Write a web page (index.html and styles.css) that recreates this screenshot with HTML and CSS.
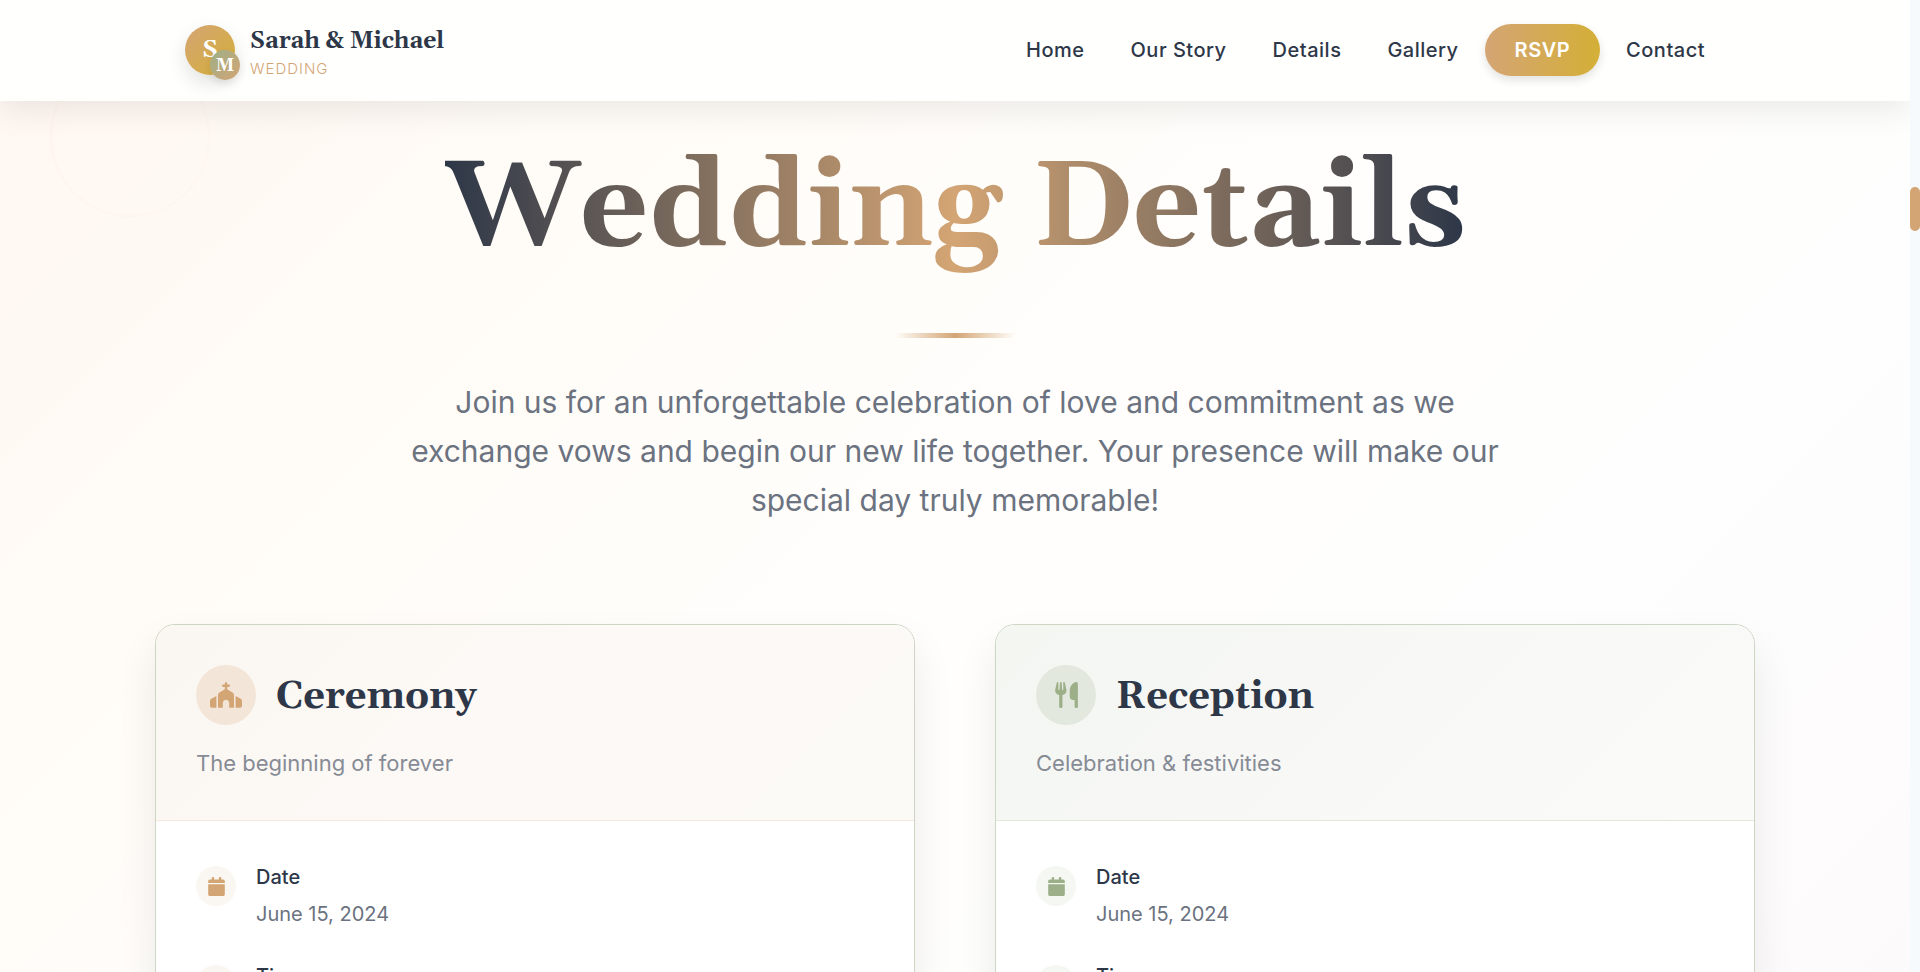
FILE: index.html
```html
<!DOCTYPE html>
<html lang="en">
<head>
<meta charset="utf-8">
<title>Sarah &amp; Michael Wedding</title>
<link rel="stylesheet" href="styles.css">
</head>
<body>
<svg class="sprite" aria-hidden="true">
  <symbol id="church" viewBox="0 0 640 512"><path d="M344 24c0-13.3-10.7-24-24-24s-24 10.7-24 24V48H264c-13.3 0-24 10.7-24 24s10.7 24 24 24h32v46.4L183.3 210c-14.5 8.7-23.3 24.3-23.3 41.2V512h96V416c0-35.3 28.7-64 64-64s64 28.7 64 64v96h96V251.2c0-16.9-8.8-32.5-23.3-41.2L344 142.4V96h32c13.3 0 24-10.7 24-24s-10.7-24-24-24H344V24zM24.9 330.3C9.5 338.8 0 354.9 0 372.4V464c0 26.5 21.5 48 48 48h80V273.6L24.9 330.3zM592 512c26.5 0 48-21.5 48-48V372.4c0-17.5-9.5-33.6-24.9-42.1L512 273.6V512h80z"/></symbol>
  <symbol id="utensils" viewBox="0 0 448 512"><path d="M416 0C400 0 288 32 288 176V288c0 35.3 28.7 64 64 64h32V480c0 17.7 14.3 32 32 32s32-14.3 32-32V352 240 32c0-17.7-14.3-32-32-32zM64 16C64 7.8 57.9 1 49.7 .1S34.2 4.6 32.4 12.5L2.1 148.8C.7 155.1 0 161.5 0 167.9c0 45.9 35.1 83.6 80 87.7V480c0 17.7 14.3 32 32 32s32-14.3 32-32V255.6c44.9-4.1 80-41.8 80-87.7c0-6.4-.7-12.8-2.1-19.1L191.6 12.5c-1.8-8-9.3-13.3-17.4-12.4S160 7.8 160 16V150.2c0 5.4-4.4 9.8-9.8 9.8c-5.1 0-9.3-3.9-9.8-9L127.9 14.6C127.2 6.3 120.3 0 112 0s-15.2 6.3-15.9 14.6L83.7 151c-.5 5.1-4.7 9-9.8 9c-5.4 0-9.8-4.4-9.8-9.8V16z"/></symbol>
  <symbol id="calendar" viewBox="0 0 448 512"><path d="M96 32V64H48C21.5 64 0 85.5 0 112v48H448V112c0-26.5-21.5-48-48-48H352V32c0-17.7-14.3-32-32-32s-32 14.3-32 32V64H160V32c0-17.7-14.3-32-32-32S96 14.3 96 32zM448 192H0V464c0 26.5 21.5 48 48 48H400c26.5 0 48-21.5 48-48V192z"/></symbol>
  <symbol id="clock" viewBox="0 0 512 512"><path d="M256 0a256 256 0 1 1 0 512A256 256 0 1 1 256 0zM232 120V256c0 8 4 15.500 10.700 20l96 64c11 7.400 25.900 4.400 33.300-6.700s4.400-25.900-6.700-33.300L280 243.200V120c0-13.300-10.700-24-24-24s-24 10.700-24 24z"/></symbol>
</svg>
<div class="page">
  <header class="site-header">
    <div class="bar">
      <a class="brand" href="#home">
        <span class="monogram">S<span class="badge">M</span></span>
        <span class="brand-text"><span class="brand-name">Sarah &amp; Michael</span><span class="brand-tag">WEDDING</span></span>
      </a>
      <nav class="nav">
        <a href="#home">Home</a>
        <a href="#story">Our Story</a>
        <a href="#details">Details</a>
        <a href="#gallery">Gallery</a>
        <a class="rsvp" href="#rsvp">RSVP</a>
        <a href="#contact">Contact</a>
      </nav>
    </div>
  </header>
  <main class="details" id="details">
    <div class="ring"></div>
    <h1>Wedding Details</h1>
    <div class="divider"></div>
    <p class="intro">Join us for an unforgettable celebration of love and commitment as we exchange vows and begin our new life together. Your presence will make our special day truly memorable!</p>
    <div class="cards">
      <article class="card ceremony">
        <div class="card-head">
          <div class="card-title"><span class="disc"><svg class="church"><use href="#church"/></svg></span><h2>Ceremony</h2></div>
          <p>The beginning of forever</p>
        </div>
        <div class="card-body">
          <div class="item"><span class="dot"><svg><use href="#calendar"/></svg></span><div><h3>Date</h3><p>June 15, 2024</p></div></div>
          <div class="item"><span class="dot"><svg><use href="#clock"/></svg></span><div><h3>Time</h3></div></div>
        </div>
      </article>
      <article class="card reception">
        <div class="card-head">
          <div class="card-title"><span class="disc"><svg class="utensils"><use href="#utensils"/></svg></span><h2>Reception</h2></div>
          <p>Celebration &amp; festivities</p>
        </div>
        <div class="card-body">
          <div class="item"><span class="dot"><svg><use href="#calendar"/></svg></span><div><h3>Date</h3><p>June 15, 2024</p></div></div>
          <div class="item"><span class="dot"><svg><use href="#clock"/></svg></span><div><h3>Time</h3></div></div>
        </div>
      </article>
    </div>
  </main>
</div>
<div class="scroll-track"><div class="scroll-thumb"></div></div>
</body>
</html>
```

FILE: styles.css
```css
* { box-sizing: border-box; margin: 0; }
body {
  display: grid;
  grid-template-columns: 1fr 10px;
  height: 100vh;
  overflow: hidden;
  font-family: Inter, "Liberation Sans", sans-serif;
  color: #2d3748;
}
.sprite { display: none; }
a { color: inherit; text-decoration: none; }
h1, h2, .brand-name, .monogram { font-family: Georgia, Gelasio, "Liberation Serif", serif; font-weight: 700; }

.page { display: flex; flex-direction: column; height: 100vh; overflow: hidden; }
.scroll-track { background: #f7fafc; padding-top: 187px; }
.scroll-thumb { height: 44px; border-radius: 5px; background: #d4a574; }

.site-header {
  position: relative;
  z-index: 2;
  flex: none;
  border-bottom: 1px solid #fffffe;
  background: #fffffe;
  box-shadow: 0 10px 30px rgba(0, 0, 0, 0.08);
}
.bar {
  display: flex;
  align-items: center;
  justify-content: space-between;
  max-width: 1600px;
  height: 100px;
  margin: 0 auto;
  padding: 0 30px;
}
.brand { display: flex; align-items: center; gap: 15px; }
.monogram {
  position: relative;
  display: grid;
  place-items: center;
  width: 50px;
  height: 50px;
  border-radius: 50%;
  background: linear-gradient(135deg, #d4a574, #d4af37);
  box-shadow: 0 8px 20px rgba(0, 0, 0, 0.12);
  color: #fff;
  font-size: 24px;
}
.badge {
  position: absolute;
  right: -5px;
  bottom: -5px;
  display: grid;
  place-items: center;
  width: 30px;
  height: 30px;
  border-radius: 50%;
  background: linear-gradient(135deg, #9caf88, #d4a574);
  box-shadow: 0 4px 8px rgba(0, 0, 0, 0.1);
  font-size: 18px;
}
.brand-text { display: flex; flex-direction: column; padding-top: 6px; }
.brand-name { font-size: 23px; line-height: 32px; }
.brand-tag { font-size: 15px; line-height: 22px; font-weight: 300; letter-spacing: 1px; color: #d4a574; }

.nav { display: flex; align-items: center; gap: 6px; font-size: 20px; font-weight: 500; letter-spacing: 0.5px; }
.nav a { padding: 0 20px; line-height: 52px; }
.nav .rsvp {
  padding: 0 30px;
  border-radius: 26px;
  background: linear-gradient(90deg, #d4a574, #d4af37);
  box-shadow: 0 4px 10px rgba(0, 0, 0, 0.12);
  color: #fff;
  font-weight: 600;
}

.details {
  position: relative;
  flex: 1;
  min-height: 0;
  overflow: hidden;
  display: flex;
  flex-direction: column;
  align-items: center;
  padding-top: 37px;
  background: linear-gradient(135deg, #fff7f2 0%, #fffcf7 25%, #fffefc 50%, #fefefe 75%, #fdfafb 100%);
}
.ring {
  position: absolute;
  top: -44px;
  left: 50px;
  width: 160px;
  height: 160px;
  border-radius: 50%;
  border: 2px solid rgba(212, 165, 116, 0.03);
}
h1 {
  font-size: 120px;
  line-height: 144px;
  background: linear-gradient(90deg, #2d3748, #d4a574 50%, #2d3748);
  -webkit-background-clip: text;
  background-clip: text;
  color: transparent;
}
.divider {
  flex: none;
  width: 120px;
  height: 5px;
  margin: 51px 0 40px;
  background: linear-gradient(90deg, transparent, #d4a574, transparent);
}
.intro { max-width: 1100px; font-size: 30px; line-height: 49px; text-align: center; color: #6b7280; }
.cards { flex: none; display: grid; grid-template-columns: 1fr 1fr; gap: 80px; width: 100%; max-width: 1600px; margin-top: 99px; }
.card {
  overflow: hidden;
  border: 1px solid #ccd6c3;
  border-radius: 20px;
  background: #fff;
  box-shadow: 0 20px 40px rgba(0, 0, 0, 0.08);
}
.card-head { padding: 40px; border-bottom: 1px solid; }
.ceremony { --accent: #d4a574; --disc: #f3e6d9; --dot: #faf6f2; }
.reception { --accent: #9caf88; --disc: #e2e8dd; --dot: #f5f7f3; }
.ceremony .card-head { background: linear-gradient(135deg, #faf6f1, #fdf9f6 50%, #fbfaf6); border-color: #f5e8dc; }
.reception .card-head { background: linear-gradient(135deg, #f3f6f1, #f8f8f7 50%, #fafaf8); border-color: #e3e8dd; }
.card-title { display: flex; align-items: center; gap: 20px; }
.disc, .dot { flex: none; display: grid; place-items: center; border-radius: 50%; }
.disc { width: 60px; height: 60px; background: var(--disc); }
.dot { width: 40px; height: 40px; margin-top: 5px; background: var(--dot); }
svg { fill: var(--accent); }
.church { width: 32px; height: 26px; }
.utensils { width: 23px; height: 26px; }
.dot svg { width: 17px; height: 19px; }
h2 { padding-top: 4px; font-size: 38px; line-height: 56px; }
.card-head p { margin-top: 21px; font-size: 22px; line-height: 34px; color: #868b95; }
.card-body { display: grid; gap: 30px; padding: 40px; }
.item { display: flex; gap: 20px; }
.item h3 { font-size: 20px; line-height: 32px; font-weight: 500; }
.item p { margin-top: 5px; font-size: 20px; line-height: 32px; color: #6b7280; }
```
